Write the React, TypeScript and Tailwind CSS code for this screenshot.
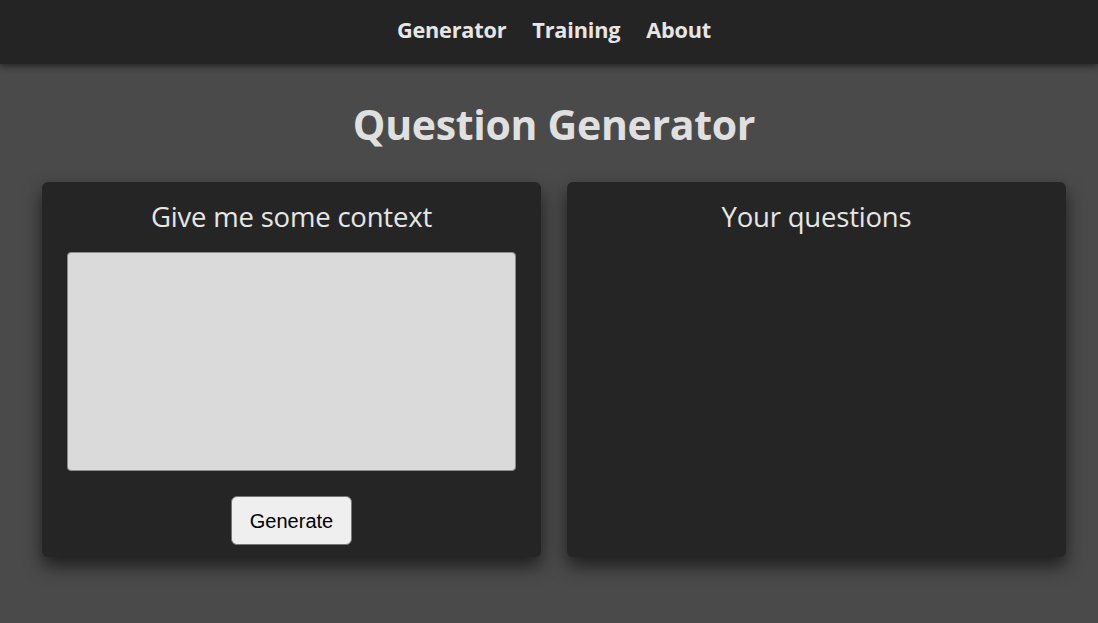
import React from 'react';

const FONT = 'font-["Open_Sans","Noto_Sans",sans-serif]';

const NAV = ['Generator', 'Training', 'About'];

export default function App() {
  return (
    <div className={`min-h-[623px] w-full bg-[#4a4a4a] text-[#e4e4e4] ${FONT}`}>
      {/* top bar */}
      <nav className="relative z-10 flex h-16 items-center justify-center gap-[26px] bg-[#242424] pb-1 pl-[10px] shadow-[0_3px_6px_rgba(0,0,0,0.45)]">
        {NAV.map((item) => (
          <a key={item} className="cursor-pointer text-[21.7px] font-bold tracking-[-0.2px] text-[#e6e6e6]">
            {item}
          </a>
        ))}
      </nav>

      <main className="pl-[10px]">
        <h1 className="mt-[34px] text-center text-[41px] font-bold leading-[52px] tracking-[-0.3px] text-[#e0e0e0]">
          Question Generator
        </h1>

        <div className="mt-[32px] flex gap-[26px] px-[32px]">
          {/* context card */}
          <section className="flex h-[375px] w-[499px] flex-col items-center rounded-md bg-[#252525] px-[25px] pt-[17px] shadow-[0_9px_18px_rgba(0,0,0,0.6)]">
            <h2 className="text-[27.5px] font-normal leading-[35px] tracking-[-0.2px] text-[#e6e6e6]">Give me some context</h2>
            <textarea className="mt-[18px] h-[219px] w-full resize-none rounded-[4px] border border-[#8a8a8a] bg-[#dadada] outline-none" />
            <button className="mt-[25px] h-[49px] w-[121px] rounded-md border border-[#767676] bg-[#efefef] font-['Liberation_Sans',Arial,sans-serif] text-[20px] text-black">
              Generate
            </button>
          </section>

          {/* output card */}
          <section className="flex h-[375px] w-[499px] flex-col items-center rounded-md bg-[#252525] px-[25px] pt-[17px] shadow-[0_9px_18px_rgba(0,0,0,0.6)]">
            <h2 className="text-[27.5px] font-normal leading-[35px] tracking-[-0.2px] text-[#e6e6e6]">Your questions</h2>
          </section>
        </div>
      </main>
    </div>
  );
}
